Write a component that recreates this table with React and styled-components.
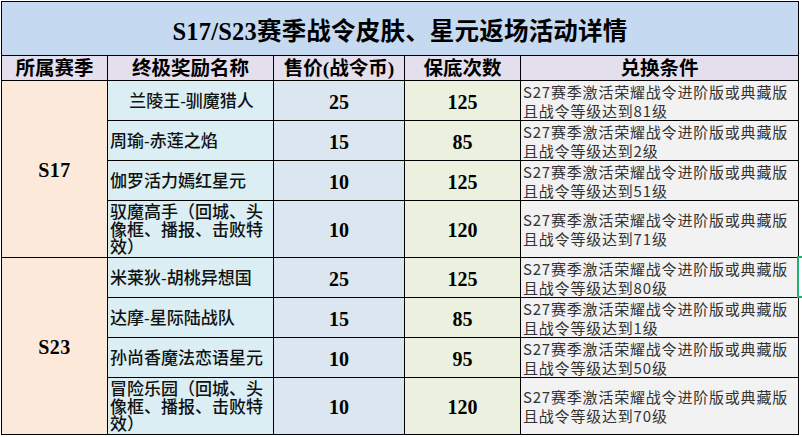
import React from "react";
import styled, { createGlobalStyle } from "styled-components";

const GlobalStyle = createGlobalStyle`
  html, body {
    margin: 0;
    padding: 0;
    background: #ffffff;
  }
  * { box-sizing: border-box; }
`;

const CJK = `"Noto Sans CJK SC", sans-serif`;
const SERIF_CJK = `"Liberation Serif", "Noto Sans CJK SC", serif`;

const Page = styled.div`
  position: relative;
  width: 802px;
  height: 437px;
  padding: 1px 0 0 1px;
  overflow: hidden;
`;

const Sheet = styled.div`
  display: grid;
  grid-template-columns: 105px 165px 130px 115px 277px;
  grid-template-rows: 53px 24px repeat(3, 39px) 56px repeat(3, 39px) 56px;
  gap: 1px;
  width: max-content;
  background: #000000;
  border: 1px solid #000000;
`;

const Cell = styled.div`
  display: flex;
  align-items: center;
  justify-content: center;
  overflow: hidden;
  color: #000000;
`;

const TitleCell = styled(Cell)`
  grid-column: 1 / -1;
  background: #c5d9f1;
  font-family: ${SERIF_CJK};
  font-weight: 700;
  font-size: 24.5px;
  padding-top: 2px;
  letter-spacing: 0.2px;
`;

const HeaderCell = styled(Cell)`
  background: #e4dfec;
  font-family: ${SERIF_CJK};
  font-weight: 700;
  font-size: 19.5px;
  line-height: 22px;
  padding-top: 1px;
`;

const SeasonCell = styled(Cell)`
  grid-row: span 4;
  background: #fde9d9;
  font-family: "Liberation Serif", serif;
  font-weight: 700;
  font-size: 20px;
  letter-spacing: 0.5px;
  padding-top: 3px;
`;

const NameCell = styled(Cell)`
  background: #daeef3;
  justify-content: ${(p) => (p.$center ? "center" : "flex-start")};
  text-align: ${(p) => (p.$center ? "center" : "left")};
  padding: 3px 0 0 2px;
  font-family: "Liberation Sans", ${CJK};
  font-weight: 500;
  font-size: 17px;
  line-height: 17.5px;
  color: #111111;
`;

const NumberCell = styled(Cell)`
  background: ${(p) => p.$bg};
  font-family: "Liberation Serif", serif;
  font-weight: 700;
  font-size: 20px;
  padding-top: 3px;
`;

const ConditionCell = styled(Cell)`
  background: #f2f2f2;
  flex-direction: column;
  align-items: flex-start;
  padding: 0 0 0 2px;
  font-family: ${CJK};
  font-weight: 400;
  font-size: 15px;
  line-height: 19px;
  letter-spacing: 0.8px;
  color: #333333;
`;

const ConditionLine = styled.span`
  display: block;
  white-space: nowrap;
`;

const Selection = styled.div`
  position: absolute;
  left: 797px;
  top: 256px;
  width: 10px;
  height: 42px;
  border: 2px solid #21b06f;
  border-right: none;
`;

const groups = [
  {
    season: "S17",
    rows: [
      { name: "兰陵王-驯魔猎人", price: 25, count: 125, level: 81, center: true },
      { name: "周瑜-赤莲之焰", price: 15, count: 85, level: 2 },
      { name: "伽罗活力嫣红星元", price: 10, count: 125, level: 51 },
      { name: "驭魔高手（回城、头像框、播报、击败特效）", price: 10, count: 120, level: 71 },
    ],
  },
  {
    season: "S23",
    rows: [
      { name: "米莱狄-胡桃异想国", price: 25, count: 125, level: 80 },
      { name: "达摩-星际陆战队", price: 15, count: 85, level: 1 },
      { name: "孙尚香魔法恋语星元", price: 10, count: 95, level: 50 },
      { name: "冒险乐园（回城、头像框、播报、击败特效）", price: 10, count: 120, level: 70 },
    ],
  },
];

const headers = ["所属赛季", "终极奖励名称", "售价(战令币)", "保底次数", "兑换条件"];

export default function App() {
  return (
    <>
      <GlobalStyle />
      <Page>
        <Sheet>
          <TitleCell>S17/S23赛季战令皮肤、星元返场活动详情</TitleCell>
          {headers.map((h) => (
            <HeaderCell key={h}>{h}</HeaderCell>
          ))}
          {groups.map((g) =>
            g.rows.map((r, i) => (
              <React.Fragment key={g.season + i}>
                {i === 0 && <SeasonCell>{g.season}</SeasonCell>}
                <NameCell $center={r.center}>{r.name}</NameCell>
                <NumberCell $bg="#dce6f1">{r.price}</NumberCell>
                <NumberCell $bg="#ebf1de">{r.count}</NumberCell>
                <ConditionCell>
                  <ConditionLine>S27赛季激活荣耀战令进阶版或典藏版</ConditionLine>
                  <ConditionLine>且战令等级达到{r.level}级</ConditionLine>
                </ConditionCell>
              </React.Fragment>
            ))
          )}
        </Sheet>
        <Selection />
      </Page>
    </>
  );
}
